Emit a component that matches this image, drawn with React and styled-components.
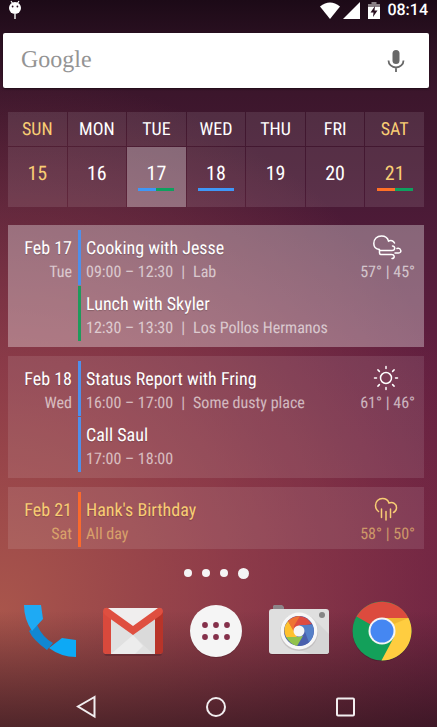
import React from "react";
import styled, { createGlobalStyle } from "styled-components";

const days = [
  { name: "SUN", date: 15, weekend: true, marks: [] },
  { name: "MON", date: 16, marks: [] },
  { name: "TUE", date: 17, today: true, marks: ["#3f97f7", "#0fa05f"] },
  { name: "WED", date: 18, marks: ["#3f97f7"] },
  { name: "THU", date: 19, marks: [] },
  { name: "FRI", date: 20, marks: [] },
  { name: "SAT", date: 21, weekend: true, marks: ["#ff7026", "#0fa05f"] },
];

const agenda = [
  {
    date: "Feb 17",
    day: "Tue",
    today: true,
    icon: WindIcon,
    temp: "57° | 45°",
    events: [
      { title: "Cooking with Jesse", time: "09:00 – 12:30", place: "Lab", color: "#4f8fea" },
      { title: "Lunch with Skyler", time: "12:30 – 13:30", place: "Los Pollos Hermanos", color: "#1f9a5c" },
    ],
  },
  {
    date: "Feb 18",
    day: "Wed",
    icon: SunIcon,
    temp: "61° | 46°",
    events: [
      { title: "Status Report with Fring", time: "16:00 – 17:00", place: "Some dusty place", color: "#4f8fea" },
      { title: "Call Saul", time: "17:00 – 18:00", color: "#4f8fea" },
    ],
  },
  {
    date: "Feb 21",
    day: "Sat",
    weekend: true,
    icon: RainIcon,
    temp: "58° | 50°",
    events: [{ title: "Hank's Birthday", time: "All day", color: "#fb6a2c" }],
  },
];

export default function App() {
  return (
    <Screen>
      <GlobalStyle />
      <StatusBar>
        <BugIcon />
        <StatusIcons>
          <WifiIcon />
          <SignalIcon />
          <BatteryIcon />
          <Clock>08:14</Clock>
        </StatusIcons>
      </StatusBar>
      <SearchBar onSubmit={(e) => e.preventDefault()}>
        <SearchLogo htmlFor="search">Google</SearchLogo>
        <SearchInput id="search" type="text" />
        <MicButton type="button" aria-label="Voice search">
          <MicIcon />
        </MicButton>
      </SearchBar>
      <Widgets>
        <Week>
          <thead>
            <tr>
              {days.map((d) => (
                <DayName key={d.name} $weekend={d.weekend}>{d.name}</DayName>
              ))}
            </tr>
          </thead>
          <tbody>
            <tr>
              {days.map((d) => (
                <DayCell key={d.date} $weekend={d.weekend} $today={d.today}>
                  {d.date}
                  <Marks>
                    {d.marks.map((c) => (
                      <Mark key={c} $color={c} />
                    ))}
                  </Marks>
                </DayCell>
              ))}
            </tr>
          </tbody>
        </Week>
        <Agenda>
          {agenda.map((item) => (
            <AgendaCard key={item.date} {...item} />
          ))}
        </Agenda>
      </Widgets>
      <Pages>
        <Dot />
        <Dot />
        <Dot />
        <Dot $active />
      </Pages>
      <Dock>
        <DockButton aria-label="Phone"><PhoneIcon /></DockButton>
        <DockButton aria-label="Gmail"><GmailIcon /></DockButton>
        <DockButton aria-label="Apps"><AppsIcon /></DockButton>
        <DockButton aria-label="Camera"><CameraIcon /></DockButton>
        <DockButton aria-label="Chrome"><ChromeIcon /></DockButton>
      </Dock>
      <NavBar>
        <NavButton aria-label="Back">
          <NavSvg><path d="M20.500 3 L4 12.500 L20.500 22.500 Z" /></NavSvg>
        </NavButton>
        <NavButton aria-label="Home">
          <NavSvg><circle cx="13" cy="13" r="9" /></NavSvg>
        </NavButton>
        <NavButton aria-label="Recents">
          <NavSvg><rect x="5" y="4.500" width="17" height="17" rx="1" /></NavSvg>
        </NavButton>
      </NavBar>
    </Screen>
  );
}

function AgendaCard({ date, day, today, weekend, icon: Icon, temp, events }) {
  return (
    <Card $today={today} $weekend={weekend}>
      <DateCol>
        <Title>{date}</Title>
        <Detail>{day}</Detail>
      </DateCol>
      <Events>
        {events.map((e) => (
          <Event key={e.title} $color={e.color}>
            <Title>{e.title}</Title>
            <Detail>
              {e.time}
              {e.place && <Divider>|</Divider>}
              {e.place}
            </Detail>
          </Event>
        ))}
      </Events>
      <Weather>
        <Icon />
        <Detail>{temp}</Detail>
      </Weather>
    </Card>
  );
}

/* Status icons */
function BugIcon() {
  return (
    <svg width="14" height="19" viewBox="0 0 14 19">
      <path d="M3 1l2 3M11 1L9 4" stroke="#fff" strokeWidth="1.200" />
      <circle cx="7" cy="8" r="6" fill="#fff" />
      <path d="M7 13v6" stroke="#ddd" strokeWidth="1.600" />
      <circle cx="4.600" cy="6.500" r="0.900" fill="#2a1020" />
      <circle cx="9.400" cy="6.500" r="0.900" fill="#2a1020" />
    </svg>
  );
}

function WifiIcon() {
  return (
    <svg width="20" height="17" viewBox="0 0 20 17">
      <path d="M0 4.500Q10 -3.500 20 4.500L10 17Z" fill="#fff" />
    </svg>
  );
}

function SignalIcon() {
  return (
    <svg width="17" height="17" viewBox="0 0 17 17">
      <path d="M17 0V17H0Z" fill="#fff" />
    </svg>
  );
}

function BatteryIcon() {
  return (
    <svg width="12" height="17" viewBox="0 0 12 17">
      <path d="M3.500 0h5v2H12v4H0V2h3.500z" fill="#8b8187" />
      <path d="M0 5h12v12H0z" fill="#fff" />
      <path d="M7 4L2.500 10.500H5.500L5 15L9.500 8.500H6.500Z" fill="#2a1020" />
    </svg>
  );
}

function MicIcon() {
  return (
    <svg width="18" height="24" viewBox="0 0 18 24" fill="none">
      <rect x="5.500" y="1" width="7" height="14" rx="3.500" fill="#686868" />
      <path d="M1.500 11.500a7.500 7 0 0 0 15 0M9 18.500V23" stroke="#686868" strokeWidth="1.800" />
    </svg>
  );
}

/* Weather icons */
function WindIcon() {
  return (
    <WeatherSvg>
      <path d="M6.500 17.500C2.500 17 0.800 14.500 0.800 11.500C0.800 7 4 4 8.500 4C12 4 14.500 5.500 15.500 9C18 7.500 20.500 9 21.500 11" />
      <path d="M6.500 18.500H19C22.500 18.500 22.500 14 19.500 14" />
      <path d="M24 16.500C28 15.500 29.500 21 25.500 21H22M6.500 18.500V21Q6.500 22.500 8 22.500H18.500C22 22.500 22 26.500 19 26.500" />
    </WeatherSvg>
  );
}

function SunIcon() {
  return (
    <WeatherSvg>
      <circle cx="13" cy="15" r="5.500" />
      <path d="M13 3.500V5.500M13 24.500V26.500M1.500 15H3.500M22.500 15H24.500M4.900 6.900L6.400 8.400M19.600 21.600L21.100 23.100M4.900 23.100L6.400 21.600M19.600 8.400L21.100 6.900" />
    </WeatherSvg>
  );
}

function RainIcon() {
  return (
    <WeatherSvg>
      <path d="M5.500 17.500C3.500 16 2.500 13.500 2.500 11.500C2.500 7.500 5.500 4.500 9.500 4.500C12.500 4.500 15 6 16 9C20 7.500 23.500 10 23.500 13.500C23.500 16 22.500 17.500 20.500 18.500" />
      <path d="M8.500 15V23.500M13 17.500V26M17.500 15V23.500" />
    </WeatherSvg>
  );
}

/* Dock icons */
function PhoneIcon() {
  return (
    <svg width="60" height="60" viewBox="0 0 60 60">
      <path d="M17 24Q23 37 33 42L27 49Q13 39 9 30Z" fill="#1187d2" />
      <path d="M4 4H21L23 18L12 30Q4 18 4 4Z" fill="#1eaaf4" />
      <path d="M42 37L56 39V56Q41 56 29 47Z" fill="#0da9f5" />
    </svg>
  );
}

function GmailIcon() {
  return (
    <svg width="60" height="60" viewBox="0 0 60 60">
      <rect x="1" y="9" width="58" height="46" rx="3" fill="#4a1d27" opacity="0.400" />
      <rect x="1" y="7" width="58" height="46" rx="3" fill="#e0e0e0" />
      <path d="M8 53L30 34L50 53Z" fill="#ececec" />
      <path d="M8 17L30 34L40 45L32 53H52V18Z" fill="#d3d3d3" opacity="0.400" />
      <path d="M4 7H56L30 27Z" fill="#f0eeee" />
      <path d="M0 10V50Q0 53 3 53H8V17Z" fill="#d9493c" />
      <path d="M60 10V50Q60 53 57 53H52V17Z" fill="#b83429" />
      <path d="M0 10Q1 6 5 7L30 25L55 7Q59 6 60 10Q60 12 58 14L30 34L2 14Q0 12 0 10Z" fill="#df4f40" />
    </svg>
  );
}

function AppsIcon() {
  return (
    <svg width="60" height="60" viewBox="0 0 60 60">
      <circle cx="30" cy="31" r="26" fill="#4a1d27" opacity="0.400" />
      <circle cx="30" cy="30" r="26" fill="#f5f5f5" />
      {[24, 36].map((y) =>
        [19, 30, 41].map((x) => <circle key={x + y * 100} cx={x} cy={y} r="2.900" fill="#84304a" />)
      )}
    </svg>
  );
}

function CameraIcon() {
  return (
    <svg width="60" height="60" viewBox="0 0 60 60">
      <path d="M5 4h8l2 2v4H4V5z" fill="#8d8589" />
      <rect x="0" y="9" width="60" height="45" rx="3" fill="#4a1d27" opacity="0.400" />
      <rect x="0" y="8" width="60" height="45" rx="3" fill="#dfdfdf" />
      <path d="M43 16L60 33V50Q60 53 57 53H42L18 45Z" fill="#d5d5d5" />
      <circle cx="53" cy="14" r="3" fill="#858585" />
      <circle cx="30" cy="31" r="19" fill="#b5b0b2" opacity="0.600" />
      <circle cx="30" cy="30" r="18.500" fill="#f7f7f7" />
      <circle cx="30" cy="30" r="15" fill="#4a60ad" />
      <path d="M19 20Q27 12 38 17.500L43 23L30 25L25 31Z" fill="#de4c42" />
      <path d="M30 24H43.700Q47 34 40 41.500L33 33Z" fill="#5580c8" />
      <path d="M35 28L40 41.500Q35 45.500 28 45L32 34Z" fill="#4a60ad" />
      <path d="M34 35L28 45Q21 43 17 36H27Z" fill="#91c24c" />
      <path d="M27 34L28 36H17Q13 27 19 20L25 30Z" fill="#ffc12e" />
      <path d="M25 31L19 20Q23 16 31 15L25 25Z" fill="#ee7434" />
      <circle cx="30" cy="30" r="5.500" fill="#f5f5f5" />
    </svg>
  );
}

function ChromeIcon() {
  return (
    <svg width="60" height="60" viewBox="0 0 60 60">
      <circle cx="30" cy="31" r="29.500" fill="#3a1526" opacity="0.400" />
      <circle cx="30" cy="30" r="29.500" fill="#13a05a" />
      <path d="M30 30L4.500 15.500A29.500 29.500 0 0 1 56.500 17H30L20 40Z" fill="#dc4b3e" />
      <path d="M4.500 15.500L17 37L20 30Z" fill="#13a05a" />
      <path d="M30 17H56.500A29.500 29.500 0 0 1 29.500 59.500L42 36Z" fill="#ffcd40" />
      <path d="M35 17H56.500L42 23Z" fill="#edb02c" opacity="0.700" />
      <circle cx="30" cy="30" r="13.500" fill="#f5f5f5" />
      <circle cx="30" cy="30" r="11.500" fill="#4587f2" />
    </svg>
  );
}

const GlobalStyle = createGlobalStyle`
  * {
    box-sizing: border-box;
  }
  body {
    margin: 0;
    background: #3a1526;
    text-rendering: geometricPrecision;
  }
  svg {
    display: block;
  }
  button {
    border: 0;
    padding: 0;
    background: transparent;
    cursor: pointer;
  }
`;

const Screen = styled.main`
  display: flex;
  flex-direction: column;
  min-height: 100vh;
  padding-right: 5px;
  color: #fff;
  font-family: "Roboto Condensed", Roboto, sans-serif;
  background:
    linear-gradient(to top, rgba(30, 14, 20, 0.6), rgba(30, 14, 20, 0) 16%),
    radial-gradient(ellipse 115% 74% at 0% 84%, rgba(172, 88, 76, 0.95), rgba(166, 78, 78, 0.6) 45%, rgba(140, 50, 70, 0)),
    linear-gradient(to bottom, #1c0a17 0%, #2c1122 6%, #3c162c 13%, #4a1a36 28%, #621f40 50%, #6c2142 72%, #692042 100%);
`;
const StatusBar = styled.header`
  display: flex;
  justify-content: space-between;
  height: 20px;
  padding: 0 4px 0 8px;
`;
const StatusIcons = styled.div`
  display: flex;
  align-items: center;
  gap: 3px;
  svg:nth-child(3) {
    margin: 0 4px 0 5px;
  }
`;
const Clock = styled.time`
  font-family: Roboto, sans-serif;
  font-size: 16px;
  font-weight: 500;
  line-height: 20px;
`;
const SearchBar = styled.form`
  display: flex;
  align-items: center;
  height: 55px;
  margin: 13px 3px 24px;
  padding: 0 24px 0 18px;
  border-radius: 2px;
  background: #fff;
  box-shadow: 0 1px 2px rgba(0, 0, 0, 0.5);
`;
const SearchLogo = styled.label`
  color: #949494;
  font-family: "Liberation Serif", serif;
  font-size: 24px;
`;
const SearchInput = styled.input`
  flex: 1;
  min-width: 0;
  height: 40px;
  border: 0;
  outline: none;
  background: transparent;
  font-size: 18px;
`;
const MicButton = styled.button`
  padding: 0;
`;
const Widgets = styled.div`
  padding: 0 8px;
`;
const Week = styled.table`
  width: calc(100% + 2px);
  margin: -1px -1px 17px;
  table-layout: fixed;
  border-spacing: 1px;
  line-height: 24px;
`;
const DayName = styled.th`
  height: 34px;
  padding: 2px 0 0;
  background: rgba(255, 255, 255, 0.1);
  color: ${(props) => (props.$weekend ? "#f8cd74" : "#fff")};
  font-size: 18px;
  font-weight: 400;
`;
const DayCell = styled.td`
  height: 60px;
  padding: 14px 0 0;
  background: rgba(255, 255, 255, ${(props) => (props.$today ? 0.34 : 0.1)});
  color: ${(props) => (props.$weekend ? "#f8cd74" : "#fff")};
  font-size: 20px;
  text-align: center;
  vertical-align: top;
`;
const Marks = styled.div`
  display: flex;
  width: 36px;
  height: 3px;
  margin: 3px auto 0;
`;
const Mark = styled.span`
  flex: 1;
  background: ${(props) => props.$color};
`;
const Agenda = styled.div`
  display: flex;
  flex-direction: column;
  gap: 9px;
`;
const Card = styled.section`
  display: flex;
  padding: 5px 9px 6px 0;
  background: ${(props) => (props.$today ? "rgba(255, 255, 255, 0.33)" : "rgba(255, 255, 255, 0.1)")};
  color: ${(props) => (props.$weekend ? "#f8cd74" : "#fff")};
  &:last-child {
    padding-bottom: 2px;
  }
`;
const DateCol = styled.div`
  width: 70px;
  padding: 7px 6px 0 0;
  text-align: right;
`;
const Events = styled.div`
  display: flex;
  flex: 1;
  flex-direction: column;
  gap: 1px;
`;
const Event = styled.div`
  height: 55px;
  padding: 7px 0 0 5px;
  border-left: 3px solid ${(props) => props.$color};
`;
const Title = styled.div`
  font-size: 18px;
  line-height: 24px;
  white-space: nowrap;
  text-shadow: 0 1px 1px rgba(0, 0, 0, 0.2);
`;
const Detail = styled.div`
  font-size: 16px;
  line-height: 22px;
  white-space: nowrap;
  opacity: 0.62;
`;
const Divider = styled.span`
  margin: 0 8px;
`;
const Weather = styled.div`
  display: flex;
  flex-direction: column;
  align-items: center;
  padding-top: 3px;
`;
const WeatherSvg = styled.svg.attrs({ viewBox: "0 1 30 28" })`
  width: 30px;
  height: 28px;
  fill: none;
  stroke: currentColor;
  stroke-width: 1.5px;
  stroke-linecap: round;
`;
const Pages = styled.div`
  display: flex;
  align-items: center;
  justify-content: center;
  gap: 10px;
  height: 12px;
  margin-top: 18px;
`;
const Dot = styled.span`
  width: ${(props) => (props.$active ? "11px" : "8px")};
  height: ${(props) => (props.$active ? "11px" : "8px")};
  border-radius: 50%;
  background: #f5f5f5;
`;
const Dock = styled.nav`
  display: grid;
  grid-template-columns: repeat(5, 1fr);
  margin-top: 22px;
  padding: 0 8px;
`;
const DockButton = styled.button`
  display: flex;
  justify-content: center;
`;
const NavBar = styled.nav`
  display: grid;
  grid-template-columns: repeat(3, 1fr);
  margin-top: 33px;
  padding: 0 22px;
`;
const NavButton = styled.button`
  display: flex;
  justify-content: center;
`;
const NavSvg = styled.svg.attrs({ viewBox: "0 0 26 26" })`
  width: 26px;
  height: 26px;
  fill: none;
  stroke: #f2eef0;
  stroke-width: 2px;
`;
